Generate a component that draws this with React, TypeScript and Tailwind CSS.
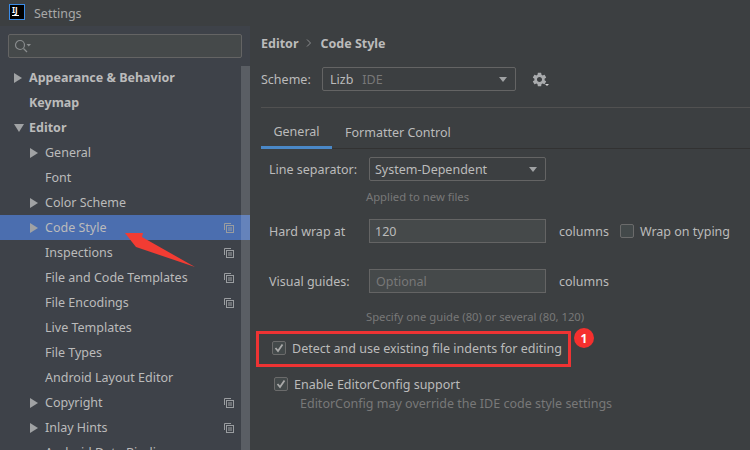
import { MdSettings } from "react-icons/md";

const rows = [
  { label: "Appearance & Behavior", bold: true, arrow: "right" },
  { label: "Keymap", bold: true },
  { label: "Editor", bold: true, arrow: "down" },
  { label: "General", indent: true, arrow: "right" },
  { label: "Font", indent: true },
  { label: "Color Scheme", indent: true, arrow: "right" },
  { label: "Code Style", indent: true, arrow: "right", copy: true, active: true },
  { label: "Inspections", indent: true, copy: true },
  { label: "File and Code Templates", indent: true, copy: true },
  { label: "File Encodings", indent: true, copy: true },
  { label: "Live Templates", indent: true },
  { label: "File Types", indent: true },
  { label: "Android Layout Editor", indent: true },
  { label: "Copyright", indent: true, arrow: "right", copy: true },
  { label: "Inlay Hints", indent: true, arrow: "right", copy: true },
  { label: "Android Data Binding", indent: true },
];

function CopyIcon() {
  return (
    <svg width="10" height="10" viewBox="0 0 10 10" className="absolute left-[224px] top-[8px]" fill="none" stroke="#9a9da0">
      <path d="M0.5 7V0.5H7" />
      <rect x="2.5" y="2.5" width="7" height="7" />
      <path d="M4 5H8M4 7H8" />
    </svg>
  );
}

function SideRow({ row }: { row: (typeof rows)[number] }) {
  return (
    <div className={`relative flex h-[25px] shrink-0 items-center ${row.active ? "bg-[#4b6eaf]" : ""}`}>
      <div className={`flex w-[29px] shrink-0 pl-[14px] ${row.indent ? "ml-[16px]" : ""}`}>
        {row.arrow === "right" && <div className="h-0 w-0 border-y-[5px] border-l-[8px] border-y-transparent border-l-[#a0a2a4]" />}
        {row.arrow === "down" && <div className="h-0 w-0 border-x-[5px] border-t-[8px] border-x-transparent border-t-[#a0a2a4]" />}
      </div>
      <span className={row.bold ? "font-bold text-[#bbbbbb]" : "text-[#bbbbbb]"}>{row.label}</span>
      {row.copy && <CopyIcon />}
    </div>
  );
}

function Check({ checked }: { checked?: boolean }) {
  return (
    <div className="flex h-[14px] w-[14px] shrink-0 items-center justify-center rounded-[2px] border border-[#6b6b6b] bg-[#43494a]">
      {checked && (
        <svg width="10" height="10" viewBox="0 0 10 10" fill="none" stroke="#a9a9a9" strokeWidth="1.8">
          <path d="M1.5 5L4 8L8.5 1.5" />
        </svg>
      )}
    </div>
  );
}

function Caret() {
  return <div className="h-0 w-0 border-x-[4px] border-t-[5px] border-x-transparent border-t-[#a0a2a4]" />;
}

export default function App() {
  return (
    <div className="relative h-[450px] w-[750px] overflow-hidden bg-[#3c3f41] font-['Noto_Sans',sans-serif] text-[12.5px] leading-[19px] text-[#bbbbbb]">
      <div className="flex h-[26px] items-center bg-[#3c3f41] pl-[9px]">
        <div className="mb-[2px] flex h-[16px] w-[16px] flex-col border border-[#3b8ce8] bg-black px-[2px] pt-[1px] text-[8px] leading-[8px] font-bold text-white">
          IJ
          <div className="mt-[1px] h-[1px] w-[7px] bg-white" />
        </div>
        <span className="ml-[9px] text-[#a8a8a8]">Settings</span>
      </div>

      <div className="flex h-[424px]">
        <div className="relative flex w-[250px] shrink-0 flex-col overflow-hidden bg-[#3e4249]">
          <div className="mx-[8px] mt-[8px] mb-[7px] flex h-[24px] shrink-0 items-center rounded-[2px] border border-[#646464] bg-[#45494a] pl-[5px]">
            <svg width="18" height="14" viewBox="0 0 18 14" fill="none" stroke="#8a8d8f" strokeWidth="1.2">
              <circle cx="6" cy="6" r="4.5" />
              <path d="M9.5 9.5L13 13" />
              <path d="M12.5 5H17L14.75 7.5Z" fill="#8a8d8f" stroke="none" />
            </svg>
          </div>
          {rows.map((row) => (
            <SideRow key={row.label} row={row} />
          ))}
          <div className="absolute top-[40px] right-0 h-[384px] w-[9px] bg-white/15" />
        </div>

        <div className="min-w-0 flex-1 pt-[8px]">
          <div className="flex h-[18px] items-center pl-[11px] font-bold">
            Editor
            <svg width="6" height="8" viewBox="0 0 6 8" fill="none" stroke="#8a8d8f" className="mx-[8px]">
              <path d="M1 0.5L4.5 4L1 7.5" />
            </svg>
            Code Style
          </div>

          <div className="mt-[15px] flex items-center pl-[11px]">
            <span className="w-[61px]">Scheme:</span>
            <div className="flex h-[24px] w-[194px] items-center rounded-[2px] border border-[#646464] pr-[8px] pl-[7px]">
              Lizb<span className="ml-[9px] text-[#787878]">IDE</span>
              <div className="ml-auto"><Caret /></div>
            </div>
            <div className="relative ml-[15px] text-[#a9abad]">
              <MdSettings size={17} />
              <div className="absolute top-[13px] left-[14px] h-0 w-0 border-x-[2px] border-t-[2px] border-x-transparent border-t-[#d0d0d0]" />
            </div>
          </div>

          <div className="mt-[16px] ml-[11px] h-px bg-[#515151]" />

          <div className="mt-[12px] ml-[11px] flex h-[29px] border-b border-[#323232]">
            <div className="flex h-[29px] w-[71px] items-center justify-center border-b-[3px] border-[#4a88c7] pb-[3px]">General</div>
            <div className="ml-[13px] flex items-center pb-[3px]">Formatter Control</div>
          </div>

          <div className="mt-[8px] ml-[19px] flex items-center">
            <span className="w-[100px]">Line separator:</span>
            <div className="flex h-[24px] w-[177px] items-center rounded-[2px] border border-[#646464] pr-[8px] pl-[5px]">
              System-Dependent
              <div className="ml-auto"><Caret /></div>
            </div>
          </div>
          <div className="mt-[7px] ml-[116px] text-[11.25px] leading-[17px] text-[#787878]">Applied to new files</div>

          <div className="mt-[14px] ml-[19px] flex items-center">
            <span className="w-[100px]">Hard wrap at</span>
            <div className="flex h-[24px] w-[177px] items-center border border-[#646464] bg-[#45494a] pl-[5px]">120</div>
            <span className="ml-[13px]">columns</span>
            <div className="ml-[11px]"><Check /></div>
            <span className="ml-[6px]">Wrap on typing</span>
          </div>

          <div className="mt-[26px] ml-[19px] flex items-center">
            <span className="w-[100px]">Visual guides:</span>
            <div className="flex h-[24px] w-[177px] items-center border border-[#646464] bg-[#45494a] pl-[6px] text-[#787878]">Optional</div>
            <span className="ml-[13px]">columns</span>
          </div>
          <div className="mt-[15px] ml-[116px] text-[11.25px] leading-[17px] text-[#787878]">Specify one guide (80) or several (80, 120)</div>

          <div className="mt-[13px] ml-[22px] flex h-[20px] items-center">
            <Check checked />
            <span className="ml-[6px]">Detect and use existing file indents for editing</span>
          </div>

          <div className="mt-[16px] ml-[24px] flex h-[20px] items-center">
            <Check checked />
            <span className="ml-[6px]">Enable EditorConfig support</span>
          </div>
          <div className="ml-[50px] text-[#787878]">EditorConfig may override the IDE code style settings</div>
        </div>
      </div>

      {/* annotations on top of the screenshot */}
      <svg width="90" height="50" viewBox="0 0 90 50" className="absolute top-[225px] left-[120px]">
        <path d="M5 8L23 8L22 12L75 42L16 22L12 17Z" fill="#f23c33" />
      </svg>
      <div className="absolute top-[331px] left-[256px] h-[36px] w-[315px] border-[3px] border-[#ee3333]" />
      <div className="absolute top-[328px] left-[574px] flex h-[20px] w-[20px] items-center justify-center rounded-full bg-[#f5302e] text-[12px] font-bold text-white">1</div>
    </div>
  );
}
